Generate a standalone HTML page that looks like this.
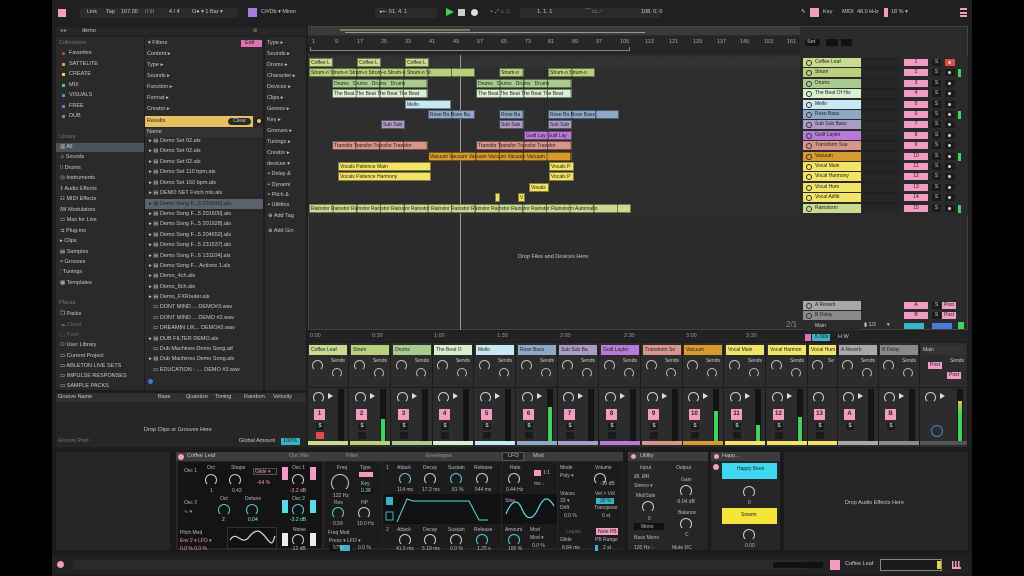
<!DOCTYPE html>
<html><head><meta charset="utf-8"><style>
*{box-sizing:border-box;margin:0;padding:0}
body{width:1024px;height:576px;background:#000;position:relative;overflow:hidden;font-family:"Liberation Sans",sans-serif;font-size:6px;color:#c8c8c8}
.a{position:absolute}
.t{position:absolute;white-space:nowrap;font-size:5.5px;line-height:7px}
.c{position:absolute;height:9px;font-size:5px;line-height:8px;color:#1c1c1c;padding-left:1px;border:1px solid rgba(0,0,0,.45);overflow:hidden;white-space:nowrap;background-image:repeating-linear-gradient(90deg,transparent 0 22.5px,rgba(0,0,0,.45) 22.5px 23.7px)}
.th{position:absolute;left:803px;width:58px;height:9px;font-size:5px;line-height:9px;color:#222;padding-left:12px}
.th:before{content:"";position:absolute;left:3px;top:2px;width:4px;height:4px;border:1px solid #333;border-radius:50%}
.nm{position:absolute;left:904px;width:24px;height:7px;background:#f29cc4;color:#222;font-size:5px;text-align:center;line-height:7px}
.sb{position:absolute;left:932px;width:9px;height:7px;background:#1b1b1b;color:#ccc;font-size:5px;text-align:center;line-height:7px}
.rb{position:absolute;left:945px;width:10px;height:7px;background:#1b1b1b}
.rb:after{content:"";position:absolute;left:3px;top:2px;width:3px;height:3px;border-radius:50%;background:#ccc}
.st{position:absolute;top:343px;width:41px;height:103px;background:#2c2c2c;border-right:1px solid #1c1c1c}
.st .tt{position:absolute;left:1px;right:1px;top:2px;height:10px;font-size:5px;line-height:10px;padding-left:2px;color:#222;overflow:hidden;white-space:nowrap}
.st .k1{position:absolute;left:4px;top:17px;width:11px;height:11px;border:1.5px solid #bbb;border-bottom-color:transparent;border-radius:50%}
.st .k2{position:absolute;left:24px;top:25px;width:10px;height:10px;border:1.5px solid #bbb;border-bottom-color:transparent;border-radius:50%}
.st .sd{position:absolute;right:3px;top:15px;font-size:5px;font-weight:normal;color:#ccc}
.st .ln{position:absolute;left:0;right:0;top:44px;height:1px;background:#1c1c1c}
.st .pk{position:absolute;left:5px;top:49px;width:11px;height:11px;border:1.5px solid #ccc;border-bottom-color:transparent;border-radius:50%}
.st .tri{position:absolute;left:20px;top:50px;width:0;height:0;border-left:5px solid #ddd;border-top:3px solid transparent;border-bottom:3px solid transparent}
.st .mt{position:absolute;left:30px;top:46px;width:6px;height:52px;background:#141414}
.st .lv{position:absolute;left:1px;right:1px;bottom:0;background:#3fd35f}
.st .n{position:absolute;left:6px;top:66px;width:11px;height:11px;background:#f29cc4;color:#222;font-size:6px;text-align:center;line-height:11px;font-weight:bold}
.st .s{position:absolute;left:8px;top:80px;width:8px;height:7px;background:#1b1b1b;color:#ccc;font-size:5px;text-align:center;line-height:7px}
.st .r{position:absolute;left:8px;top:89px;width:8px;height:7px;background:#1b1b1b}
.st .cs{position:absolute;left:0;right:0;top:98px;height:4px}
.kn{position:absolute;width:12px;height:12px;border:1.5px solid #ccc;border-bottom-color:transparent;border-radius:50%}
.kc{border-color:#5cc8d8;border-bottom-color:transparent}
.lb{position:absolute;font-size:5px;color:#bbb;white-space:nowrap}
.vb{position:absolute;font-size:5px;color:#8ed;white-space:nowrap}
</style></head><body>
<!-- app background -->
<div class="a" style="left:52px;top:0;width:920px;height:576px;background:#1d1d1d"></div>
<!-- top bar -->
<div class="a" style="left:52px;top:0;width:920px;height:26px;background:#202020"></div>
<div class="a" style="left:58px;top:9px;width:8px;height:8px;background:#f29cc4"></div>
<div class="a" style="left:80px;top:8px;width:158px;height:10px;background:#2a2a2a"></div>
<span class="t" style="left:87px;top:9px">Link</span><span class="t" style="left:106px;top:9px">Tap</span><span class="t" style="left:121px;top:9px">167.00</span><span class="t" style="left:145px;top:9px">⁞⁞  ⁞⁞⁞</span><span class="t" style="left:169px;top:9px">4 / 4</span><span class="t" style="left:192px;top:9px">O● ▾ 1 Bar ▾</span>
<div class="a" style="left:248px;top:8px;width:9px;height:9px;background:#a67be0"></div>
<span class="t" style="left:261px;top:9px">C#/Db ▾  Minor</span>
<div class="a" style="left:375px;top:8px;width:62px;height:10px;background:#2a2a2a"></div>
<span class="t" style="left:380px;top:9px">▸⇠   51.  4.  1</span>
<div class="a" style="left:446px;top:8px;width:0;height:0;border-left:8px solid #3fd35f;border-top:4.5px solid transparent;border-bottom:4.5px solid transparent"></div>
<div class="a" style="left:458px;top:9px;width:7px;height:7px;background:#ccc"></div>
<div class="a" style="left:471px;top:9px;width:7px;height:7px;background:#ddd;border-radius:50%"></div>
<span class="t" style="left:490px;top:9px;color:#999">+ ⤢  ⌂  ↺</span>
<div class="a" style="left:520px;top:8px;width:140px;height:10px;background:#2a2a2a"></div>
<span class="t" style="left:537px;top:9px">1.   1.   1</span><span class="t" style="left:585px;top:9px;color:#999">⌒ ▭ ⟋</span><span class="t" style="left:641px;top:9px">108.   0.   0</span>
<span class="t" style="left:801px;top:9px">✎</span><div class="a" style="left:810px;top:8px;width:9px;height:9px;background:#f29cc4"></div>
<span class="t" style="left:823px;top:9px">Key</span><span class="t" style="left:842px;top:9px">MIDI</span><span class="t" style="left:857px;top:9px">48.0 kHz</span>
<div class="a" style="left:884px;top:8px;width:4px;height:9px;background:#f29cc4"></div><span class="t" style="left:891px;top:9px">18 %   ▾</span>
<div class="a" style="left:960px;top:8px;width:7px;height:9px;border-top:2px solid #f29cc4;border-bottom:2px solid #f29cc4"></div><div class="a" style="left:960px;top:12px;width:7px;height:1.5px;background:#f29cc4"></div>

<!-- browser -->
<div class="a" style="left:56px;top:27px;width:250px;height:9px;background:#262626"></div>
<span class="t" style="left:60px;top:28px;color:#999">◂ ▸</span><span class="t" style="left:82px;top:28px">demo</span><span class="t" style="left:253px;top:28px;color:#999">⊗</span>
<div class="a" style="left:56px;top:37px;width:88px;height:353px;background:#2a2a2a"></div>
<div class="a" style="left:145px;top:37px;width:118px;height:353px;background:#2a2a2a"></div>
<div class="a" style="left:265px;top:37px;width:41px;height:353px;background:#2a2a2a"></div>
<span class="t" style="left:59px;top:40px;color:#777">Collections</span>
<div class="a" style="left:62px;top:52px;width:3px;height:3px;background:#e03a3a;border-radius:50%"></div><span class="t" style="left:69px;top:50px">Favorites</span>
<div class="a" style="left:62px;top:63px;width:3px;height:3px;background:#f09a30"></div><span class="t" style="left:69px;top:61px">SATTELITE</span>
<div class="a" style="left:62px;top:73px;width:3px;height:3px;background:#f0d840"></div><span class="t" style="left:69px;top:71px">CREATE</span>
<div class="a" style="left:62px;top:84px;width:3px;height:3px;background:#3fd38a"></div><span class="t" style="left:69px;top:82px">MIX</span>
<div class="a" style="left:62px;top:94px;width:3px;height:3px;background:#3a9ae0"></div><span class="t" style="left:69px;top:92px">VISUALS</span>
<div class="a" style="left:62px;top:105px;width:3px;height:3px;background:#a65ae0"></div><span class="t" style="left:69px;top:103px">FREE</span>
<div class="a" style="left:62px;top:115px;width:3px;height:3px;background:#888"></div><span class="t" style="left:69px;top:113px">DUB</span>
<span class="t" style="left:59px;top:134px;color:#777">Library</span>
<div class="a" style="left:56px;top:143px;width:88px;height:9px;background:#4b535a"></div>
<span class="t" style="left:60px;top:144px">▥ All</span><span class="t" style="left:60px;top:154px">♫ Sounds</span><span class="t" style="left:60px;top:165px">⁞⁞ Drums</span><span class="t" style="left:60px;top:175px">◷ Instruments</span><span class="t" style="left:60px;top:186px">⫩ Audio Effects</span><span class="t" style="left:60px;top:196px">☷ MIDI Effects</span><span class="t" style="left:60px;top:207px">ꟿ Modulators</span><span class="t" style="left:60px;top:217px">▭ Max for Live</span><span class="t" style="left:60px;top:228px">⊐ Plug-ins</span><span class="t" style="left:60px;top:238px">▸ Clips</span><span class="t" style="left:60px;top:249px">▤ Samples</span><span class="t" style="left:60px;top:259px">≈ Grooves</span><span class="t" style="left:60px;top:269px">⫶ Tunings</span><span class="t" style="left:60px;top:280px">▦ Templates</span>
<span class="t" style="left:59px;top:300px;color:#777">Places</span>
<span class="t" style="left:60px;top:311px">❐ Packs</span><span class="t" style="left:60px;top:322px;color:#666">☁ Cloud</span><span class="t" style="left:60px;top:332px;color:#666">▢ Push</span><span class="t" style="left:60px;top:342px">⚇ User Library</span><span class="t" style="left:60px;top:353px">▭ Current Project</span><span class="t" style="left:60px;top:363px">▭ ABLETON LIVE SETS</span><span class="t" style="left:60px;top:373px">▭ IMPULSE RESPONSES</span><span class="t" style="left:60px;top:383px">▭ SAMPLE PACKS</span>
<span class="t" style="left:148px;top:40px">▾ Filters</span><div class="a" style="left:241px;top:40px;width:21px;height:7px;background:#e070b0"></div><span class="t" style="left:245px;top:40px;color:#222">Edit</span>
<span class="t" style="left:147px;top:51px">Content ▸</span><span class="t" style="left:147px;top:62px">Type ▸</span><span class="t" style="left:147px;top:73px">Sounds ▸</span><span class="t" style="left:147px;top:84px">Function ▸</span><span class="t" style="left:147px;top:95px">Format ▸</span><span class="t" style="left:147px;top:106px">Creator ▸</span>
<div class="a" style="left:145px;top:116px;width:108px;height:11px;background:#e8c060"></div><span class="t" style="left:147px;top:118px;color:#222">Results</span>
<div class="a" style="left:228px;top:118px;width:23px;height:7px;background:#2a2a2a;border-radius:4px"></div><span class="t" style="left:233px;top:118px">Clear</span>
<div class="a" style="left:255px;top:117px;width:8px;height:8px;background:#e8c060;border-radius:50%;border:2px solid #222"></div>
<div class="a" style="left:145px;top:128px;width:118px;height:9px;background:#333"></div><span class="t" style="left:147px;top:129px">Name</span>
<div class="a" style="left:145px;top:199px;width:118px;height:10px;background:#5a636b"></div>
<span class="t" style="left:149px;top:138px">▸ ▤ Demo Set 02.als</span><span class="t" style="left:149px;top:148px">▸ ▤ Demo Set 02.als</span><span class="t" style="left:149px;top:159px">▸ ▤ Demo Set 02.als</span><span class="t" style="left:149px;top:169px">▸ ▤ Demo Set 110 bpm.als</span><span class="t" style="left:149px;top:180px">▸ ▤ Demo Set 150 bpm.als</span><span class="t" style="left:149px;top:190px">▸ ▤ DEMO SET Fvtch mls.als</span><span class="t" style="left:149px;top:201px;color:#222">▸ ▤ Demo Song F...5 201542].als</span><span class="t" style="left:149px;top:211px">▸ ▤ Demo Song F...5 201600].als</span><span class="t" style="left:149px;top:221px">▸ ▤ Demo Song F...5 201928].als</span><span class="t" style="left:149px;top:232px">▸ ▤ Demo Song F...5 204652].als</span><span class="t" style="left:149px;top:242px">▸ ▤ Demo Song F...5 231537].als</span><span class="t" style="left:149px;top:253px">▸ ▤ Demo Song F...6 131104].als</span><span class="t" style="left:149px;top:263px">▸ ▤ Demo Song F... Actions 1.als</span><span class="t" style="left:149px;top:273px">▸ ▤ Demo_4ch.als</span><span class="t" style="left:149px;top:284px">▸ ▤ Demo_8ch.als</span><span class="t" style="left:149px;top:294px">▸ ▤ Demo_FXRouter.als</span><span class="t" style="left:153px;top:304px">▭ DONT MIND ... DEMO#3.wav</span><span class="t" style="left:153px;top:315px">▭ DONT MIND ... DEMO #2.wav</span><span class="t" style="left:153px;top:325px">▭ DREAMIN LIK... DEMO#2.wav</span><span class="t" style="left:149px;top:336px">▸ ▤ DUB FILTER DEMO.als</span><span class="t" style="left:153px;top:346px">▭ Dub Machines Demo Song.aif</span><span class="t" style="left:149px;top:356px">▸ ▤ Dub Machines Demo Song.als</span><span class="t" style="left:153px;top:367px">▭ EDUCATION - .... DEMO #3.wav</span>
<div class="a" style="left:148px;top:379px;width:5px;height:5px;background:#3a7ae0;border-radius:50%"></div>
<span class="t" style="left:267px;top:40px">Type ▸</span><span class="t" style="left:267px;top:51px">Sounds ▸</span><span class="t" style="left:267px;top:62px">Drums ▸</span><span class="t" style="left:267px;top:73px">Character ▸</span><span class="t" style="left:267px;top:84px">Devices ▸</span><span class="t" style="left:267px;top:95px">Clips ▸</span><span class="t" style="left:267px;top:106px">Genres ▸</span><span class="t" style="left:267px;top:117px">Key ▸</span><span class="t" style="left:267px;top:128px">Grooves ▸</span><span class="t" style="left:267px;top:139px">Tunings ▸</span><span class="t" style="left:267px;top:150px">Creator ▸</span><span class="t" style="left:267px;top:161px">devices ▾</span><span class="t" style="left:268px;top:171px">▪ Delay &amp;</span><span class="t" style="left:268px;top:182px">▪ Dynami</span><span class="t" style="left:268px;top:192px">▪ Pitch &amp;</span><span class="t" style="left:268px;top:202px">▪ Utilities</span><span class="t" style="left:268px;top:213px">⊕ Add Tag</span><span class="t" style="left:268px;top:228px">⊕ Add Grc</span>
<!-- groove pool -->
<div class="a" style="left:56px;top:393px;width:250px;height:54px;background:#262626"></div>
<div class="a" style="left:56px;top:393px;width:250px;height:9px;background:#303030"></div>
<span class="t" style="left:58px;top:394px">Groove Name</span><span class="t" style="left:158px;top:394px">Base</span><span class="t" style="left:186px;top:394px">Quantize</span><span class="t" style="left:215px;top:394px">Timing</span><span class="t" style="left:244px;top:394px">Random</span><span class="t" style="left:273px;top:394px">Velocity</span>
<span class="t" style="left:144px;top:427px">Drop Clips or Grooves Here</span>
<span class="t" style="left:58px;top:438px;color:#777">Groove Pool</span><span class="t" style="left:239px;top:438px">Global Amount</span><div class="a" style="left:281px;top:438px;width:19px;height:7px;background:#3ab4c8"></div><span class="t" style="left:283px;top:438px;color:#222">100%</span>

<!-- arrangement -->
<div class="a" style="left:308px;top:26px;width:660px;height:304px;background:#2b2b2b;border:1px solid #444"></div>
<div class="a" style="left:310px;top:27px;width:490px;height:8px;background:#3a3a3a"></div>
<div class="a" style="left:340px;top:29px;width:130px;height:2px;background:#7a7a5a"></div><div class="a" style="left:345px;top:32px;width:300px;height:1px;background:#999"></div>
<div class="a" style="left:308px;top:36px;width:492px;height:18px;background:#262626"></div>
<span class="t" style="left:312px;top:39px;color:#aaa;word-spacing:0">1</span><span class="t" style="left:335px;top:39px;color:#aaa">9</span><span class="t" style="left:357px;top:39px;color:#aaa">17</span><span class="t" style="left:381px;top:39px;color:#aaa">25</span><span class="t" style="left:405px;top:39px;color:#aaa">33</span><span class="t" style="left:429px;top:39px;color:#aaa">41</span><span class="t" style="left:453px;top:39px;color:#aaa">49</span><span class="t" style="left:477px;top:39px;color:#aaa">57</span><span class="t" style="left:501px;top:39px;color:#aaa">65</span><span class="t" style="left:525px;top:39px;color:#aaa">73</span><span class="t" style="left:548px;top:39px;color:#aaa">81</span><span class="t" style="left:572px;top:39px;color:#aaa">89</span><span class="t" style="left:596px;top:39px;color:#aaa">97</span><span class="t" style="left:620px;top:39px;color:#aaa">105</span><span class="t" style="left:645px;top:39px;color:#aaa">113</span><span class="t" style="left:669px;top:39px;color:#aaa">121</span><span class="t" style="left:693px;top:39px;color:#aaa">129</span><span class="t" style="left:717px;top:39px;color:#aaa">137</span><span class="t" style="left:740px;top:39px;color:#aaa">145</span><span class="t" style="left:764px;top:39px;color:#aaa">153</span><span class="t" style="left:787px;top:39px;color:#aaa">161</span>
<div class="a" style="left:310px;top:47px;width:320px;height:4px;border:1px solid #888;border-top:none"></div>
<div class="a" style="left:805px;top:39px;width:15px;height:7px;background:#111;border-radius:3px"></div><span class="t" style="left:807px;top:39px">Set</span>
<div class="a" style="left:826px;top:39px;width:12px;height:7px;background:#111"></div><div class="a" style="left:841px;top:39px;width:11px;height:7px;background:#111"></div>
<div class="a" style="left:308px;top:56px;width:492px;height:160px;background-image:repeating-linear-gradient(90deg,#2e2e2e 0 2.9px,#262626 2.9px 2.96px),repeating-linear-gradient(0deg,transparent 0 9.4px,#222 9.4px 10.4px)"></div>
<div class="a" style="left:308px;top:57px;width:492px;height:10px;background:#333"></div>
<div class="a" style="left:460px;top:55px;width:1px;height:275px;background:#9a9a9a"></div>
<!-- clips -->
<div class="c" style="left:309px;top:58px;width:24px;background-color:#c7dc8e">Coffee L</div><div class="c" style="left:357px;top:58px;width:24px;background-color:#c7dc8e">Coffee L</div><div class="c" style="left:405px;top:58px;width:24px;background-color:#c7dc8e">Coffee L</div>
<div class="c" style="left:309px;top:68px;width:166px;background-color:#b9cf7c">Strum-o Strum-o Strum-o Strum-o Strum-o Strum-o St</div><div class="c" style="left:499px;top:68px;width:25px;background-color:#b9cf7c">Strum-o</div><div class="c" style="left:548px;top:68px;width:47px;background-color:#b9cf7c">Strum-o Strum-o</div>
<div class="c" style="left:332px;top:79px;width:96px;background-color:#a9cc8e">Drums &nbsp; Drums &nbsp; Drums &nbsp; Drums</div><div class="c" style="left:476px;top:79px;width:96px;background-color:#a9cc8e">Drums &nbsp; Drums &nbsp; Drums &nbsp; Drums</div>
<div class="c" style="left:332px;top:89px;width:96px;background-color:#d9f0d0">The Beat The Beat The Beat The Beat</div><div class="c" style="left:476px;top:89px;width:96px;background-color:#d9f0d0">The Beat The Beat The Beat The Beat</div>
<div class="c" style="left:405px;top:100px;width:46px;background-color:#c8e8f2;background-image:none">Mello</div>
<div class="c" style="left:428px;top:110px;width:47px;background-color:#8ea8c8">Rose Ba Rose Ba</div><div class="c" style="left:499px;top:110px;width:25px;background-color:#8ea8c8">Rose Ba</div><div class="c" style="left:548px;top:110px;width:71px;background-color:#8ea8c8">Rose Ba Rose Bass</div>
<div class="c" style="left:381px;top:120px;width:24px;background-color:#aa9cc4">Sub Sub</div><div class="c" style="left:499px;top:120px;width:25px;background-color:#aa9cc4">Sub Sub</div><div class="c" style="left:548px;top:120px;width:24px;background-color:#aa9cc4">Sub Sub</div>
<div class="c" style="left:524px;top:131px;width:48px;background-color:#b87ad8">Guilt Lay Guilt Lay</div>
<div class="c" style="left:332px;top:141px;width:96px;background-color:#d8968a">Transfor Transfor Transfor Transfor</div><div class="c" style="left:476px;top:141px;width:96px;background-color:#d8968a">Transfor Transfor Transfor Transfor</div>
<div class="c" style="left:428px;top:152px;width:144px;background-color:#d89a2c">Vacuum Vacuum Vacuum Vacuum Vacuum Vacuum</div>
<div class="c" style="left:338px;top:162px;width:93px;background-color:#f2e466;background-image:none">Vocals Patience Main</div><div class="c" style="left:549px;top:162px;width:25px;background-color:#f2e466;background-image:none">Vocals P</div>
<div class="c" style="left:338px;top:172px;width:93px;background-color:#f2e466;background-image:none">Vocals Patience Harmony</div><div class="c" style="left:549px;top:172px;width:25px;background-color:#f2e466;background-image:none">Vocals P</div>
<div class="c" style="left:529px;top:183px;width:20px;background-color:#f2e466;background-image:none">Vocals</div>
<div class="c" style="left:495px;top:193px;width:5px;background-color:#f2e466;background-image:none"></div><div class="c" style="left:518px;top:193px;width:7px;background-color:#f2e466;background-image:none">V</div>
<div class="c" style="left:309px;top:204px;width:322px;background-color:#c7dc8e">Rainstor Rainstor Rainstor Rainstor Rainstor Rainstor Rainstor Rainstor Rainstor Rainstor Rainstor Rainstor Rainstorm Automatio</div>
<span class="t" style="left:518px;top:254px">Drop Files and Devices Here</span>
<!-- track headers -->
<div class="a" style="left:800px;top:56px;width:168px;height:160px;background:#2a2a2a"></div>
<div class="a" style="left:862px;top:58px;width:38px;height:155px;background-image:repeating-linear-gradient(0deg,#262626 0 9px,#1f1f1f 9px 10.4px)"></div>
<div class="th" style="top:58px;background:#c7dc8e">Coffee Leaf</div><div class="nm" style="top:59px">1</div><div class="sb" style="top:59px">S</div><div class="rb" style="top:59px;background:#e04a4a"></div>
<div class="th" style="top:68px;background:#b9cf7c">Strum</div><div class="nm" style="top:69px">2</div><div class="sb" style="top:69px">S</div><div class="rb" style="top:69px"></div>
<div class="th" style="top:79px;background:#a9cc8e">Drums</div><div class="nm" style="top:80px">3</div><div class="sb" style="top:80px">S</div><div class="rb" style="top:80px"></div>
<div class="th" style="top:89px;background:#d9f0d0">The Beat Of His</div><div class="nm" style="top:90px">4</div><div class="sb" style="top:90px">S</div><div class="rb" style="top:90px"></div>
<div class="th" style="top:100px;background:#c8e8f2">Mello</div><div class="nm" style="top:101px">5</div><div class="sb" style="top:101px">S</div><div class="rb" style="top:101px"></div>
<div class="th" style="top:110px;background:#8ea8c8">Rose Bass</div><div class="nm" style="top:111px">6</div><div class="sb" style="top:111px">S</div><div class="rb" style="top:111px"></div>
<div class="th" style="top:120px;background:#aa9cc4">Sub Sub Bass</div><div class="nm" style="top:121px">7</div><div class="sb" style="top:121px">S</div><div class="rb" style="top:121px"></div>
<div class="th" style="top:131px;background:#b87ad8">Guilt Layter</div><div class="nm" style="top:132px">8</div><div class="sb" style="top:132px">S</div><div class="rb" style="top:132px"></div>
<div class="th" style="top:141px;background:#d8968a">Transform Sse</div><div class="nm" style="top:142px">9</div><div class="sb" style="top:142px">S</div><div class="rb" style="top:142px"></div>
<div class="th" style="top:152px;background:#d89a2c">Vacuum</div><div class="nm" style="top:153px">10</div><div class="sb" style="top:153px">S</div><div class="rb" style="top:153px"></div>
<div class="th" style="top:162px;background:#f2e466">Vocal Main</div><div class="nm" style="top:163px">11</div><div class="sb" style="top:163px">S</div><div class="rb" style="top:163px"></div>
<div class="th" style="top:172px;background:#f2e466">Vocal Harmony</div><div class="nm" style="top:173px">12</div><div class="sb" style="top:173px">S</div><div class="rb" style="top:173px"></div>
<div class="th" style="top:183px;background:#f2e466">Vocal Hum</div><div class="nm" style="top:184px">13</div><div class="sb" style="top:184px">S</div><div class="rb" style="top:184px"></div>
<div class="th" style="top:193px;background:#f2e466">Vocal Adlib</div><div class="nm" style="top:194px">14</div><div class="sb" style="top:194px">S</div><div class="rb" style="top:194px"></div>
<div class="th" style="top:204px;background:#c7dc8e">Rainstorm</div><div class="nm" style="top:205px">15</div><div class="sb" style="top:205px">S</div><div class="rb" style="top:205px"></div>
<div class="a" style="left:958px;top:69px;width:3px;height:8px;background:#3fd35f"></div><div class="a" style="left:958px;top:111px;width:3px;height:8px;background:#3fd35f"></div><div class="a" style="left:958px;top:153px;width:3px;height:8px;background:#3fd35f"></div><div class="a" style="left:958px;top:205px;width:3px;height:8px;background:#3fd35f"></div>
<!-- returns -->
<div class="th" style="top:301px;background:#a8a8a8">A Reverb</div><div class="nm" style="top:302px">A</div><div class="sb" style="top:302px">S</div><div class="a" style="left:942px;top:302px;width:14px;height:7px;background:#f29cc4;font-size:5px;color:#222;line-height:7px;text-align:center">Post</div>
<div class="th" style="top:311px;background:#8a8a8a">B Delay</div><div class="nm" style="top:312px">B</div><div class="sb" style="top:312px">S</div><div class="a" style="left:942px;top:312px;width:14px;height:7px;background:#f29cc4;font-size:5px;color:#222;line-height:7px;text-align:center">Post</div>
<span class="t" style="left:786px;top:321px;font-size:8px;color:#888">2/1</span>
<div class="th" style="top:322px;background:#2a2a2a;color:#ccc">Main</div>
<span class="t" style="left:864px;top:322px">▮ 1/2 &nbsp; &nbsp; &nbsp; ▾</span>
<div class="a" style="left:904px;top:323px;width:20px;height:6px;background:#3ab4c8"></div><div class="a" style="left:932px;top:323px;width:20px;height:6px;background:#4a7ae0"></div><div class="a" style="left:958px;top:322px;width:6px;height:7px;background:#3fd35f"></div>
<!-- time ruler -->
<div class="a" style="left:308px;top:331px;width:660px;height:11px;background:#222"></div>
<span class="t" style="left:310px;top:333px;color:#999">0:00</span><span class="t" style="left:372px;top:333px;color:#999">0:30</span><span class="t" style="left:434px;top:333px;color:#999">1:00</span><span class="t" style="left:497px;top:333px;color:#999">1:30</span><span class="t" style="left:560px;top:333px;color:#999">2:00</span><span class="t" style="left:624px;top:333px;color:#999">2:30</span><span class="t" style="left:686px;top:333px;color:#999">3:00</span><span class="t" style="left:746px;top:333px;color:#999">3:30</span>
<div class="a" style="left:805px;top:334px;width:6px;height:7px;background:#e070b0"></div><div class="a" style="left:812px;top:334px;width:18px;height:7px;background:#3ab4c8"></div><span class="t" style="left:815px;top:334px;color:#222">5.00s</span><span class="t" style="left:838px;top:334px">H  W</span>
<!-- mixer -->
<div class="a" style="left:308px;top:343px;width:660px;height:104px;background:#2c2c2c"></div>
<div class="st" style="left:308px"><div class="tt" style="background:#c7dc8e">Coffee Leaf</div><i class="k1"></i><i class="k2"></i><b class="sd">Sends</b><i class="ln"></i><i class="pk"></i><i class="tri"></i><i class="mt"></i><b class="n">1</b><b class="s">S</b><b class="r" style="background:#e04a4a"></b><i class="cs" style="background:#c7dc8e"></i></div>
<div class="st" style="left:350px"><div class="tt" style="background:#b9cf7c">Strum</div><i class="k1"></i><i class="k2"></i><b class="sd">Sends</b><i class="ln"></i><i class="pk"></i><i class="tri"></i><i class="mt"><i class="lv" style="height:22px"></i></i><b class="n">2</b><b class="s">S</b><b class="r"></b><i class="cs" style="background:#b9cf7c"></i></div>
<div class="st" style="left:392px"><div class="tt" style="background:#a9cc8e">Drums</div><i class="k1"></i><i class="k2"></i><b class="sd">Sends</b><i class="ln"></i><i class="pk"></i><i class="tri"></i><i class="mt"></i><b class="n">3</b><b class="s">S</b><b class="r"></b><i class="cs" style="background:#a9cc8e"></i></div>
<div class="st" style="left:433px"><div class="tt" style="background:#d9f0d0">The Beat O</div><i class="k1"></i><i class="k2"></i><b class="sd">Sends</b><i class="ln"></i><i class="pk"></i><i class="tri"></i><i class="mt"></i><b class="n">4</b><b class="s">S</b><b class="r"></b><i class="cs" style="background:#d9f0d0"></i></div>
<div class="st" style="left:475px"><div class="tt" style="background:#c8e8f2">Mello</div><i class="k1"></i><i class="k2"></i><b class="sd">Sends</b><i class="ln"></i><i class="pk"></i><i class="tri"></i><i class="mt"></i><b class="n">5</b><b class="s">S</b><b class="r"></b><i class="cs" style="background:#c8e8f2"></i></div>
<div class="st" style="left:517px"><div class="tt" style="background:#8ea8c8">Rose Bass</div><i class="k1"></i><i class="k2"></i><b class="sd">Sends</b><i class="ln"></i><i class="pk"></i><i class="tri"></i><i class="mt"><i class="lv" style="height:34px"></i></i><b class="n">6</b><b class="s">S</b><b class="r"></b><i class="cs" style="background:#8ea8c8"></i></div>
<div class="st" style="left:558px"><div class="tt" style="background:#aa9cc4">Sub Sub Ba</div><i class="k1"></i><i class="k2"></i><b class="sd">Sends</b><i class="ln"></i><i class="pk"></i><i class="tri"></i><i class="mt"></i><b class="n">7</b><b class="s">S</b><b class="r"></b><i class="cs" style="background:#aa9cc4"></i></div>
<div class="st" style="left:600px"><div class="tt" style="background:#b87ad8">Guilt Layter</div><i class="k1"></i><i class="k2"></i><b class="sd">Sends</b><i class="ln"></i><i class="pk"></i><i class="tri"></i><i class="mt"></i><b class="n">8</b><b class="s">S</b><b class="r"></b><i class="cs" style="background:#b87ad8"></i></div>
<div class="st" style="left:642px"><div class="tt" style="background:#d8968a">Transform Se</div><i class="k1"></i><i class="k2"></i><b class="sd">Sends</b><i class="ln"></i><i class="pk"></i><i class="tri"></i><i class="mt"></i><b class="n">9</b><b class="s">S</b><b class="r"></b><i class="cs" style="background:#d8968a"></i></div>
<div class="st" style="left:683px"><div class="tt" style="background:#d89a2c">Vacuum</div><i class="k1"></i><i class="k2"></i><b class="sd">Sends</b><i class="ln"></i><i class="pk"></i><i class="tri"></i><i class="mt"><i class="lv" style="height:30px"></i></i><b class="n">10</b><b class="s">S</b><b class="r"></b><i class="cs" style="background:#d89a2c"></i></div>
<div class="st" style="left:725px"><div class="tt" style="background:#f2e466">Vocal Main</div><i class="k1"></i><i class="k2"></i><b class="sd">Sends</b><i class="ln"></i><i class="pk"></i><i class="tri"></i><i class="mt"><i class="lv" style="height:16px"></i></i><b class="n">11</b><b class="s">S</b><b class="r"></b><i class="cs" style="background:#f2e466"></i></div>
<div class="st" style="left:767px"><div class="tt" style="background:#f2e466">Vocal Harmon</div><i class="k1"></i><i class="k2"></i><b class="sd">Sends</b><i class="ln"></i><i class="pk"></i><i class="tri"></i><i class="mt"><i class="lv" style="height:24px"></i></i><b class="n">12</b><b class="s">S</b><b class="r"></b><i class="cs" style="background:#f2e466"></i></div>
<div class="st" style="left:808px;width:30px"><div class="tt" style="background:#f2e466">Vocal Hum</div><i class="k1"></i><b class="sd">Se</b><i class="ln"></i><i class="pk"></i><b class="n">13</b><b class="s">S</b><b class="r"></b><i class="cs" style="background:#f2e466"></i></div>
<div class="st" style="left:838px"><div class="tt" style="background:#a8a8a8">A Reverb</div><i class="k1"></i><i class="k2"></i><b class="sd">Sends</b><i class="ln"></i><i class="pk"></i><i class="tri"></i><i class="mt"></i><b class="n">A</b><b class="s">S</b><i class="cs" style="background:#a8a8a8"></i></div>
<div class="st" style="left:879px"><div class="tt" style="background:#8a8a8a">B Delay</div><i class="k1"></i><i class="k2"></i><b class="sd">Sends</b><i class="ln"></i><i class="pk"></i><i class="tri"></i><i class="mt"></i><b class="n">B</b><b class="s">S</b><i class="cs" style="background:#8a8a8a"></i></div>
<div class="st" style="left:920px;width:48px"><div class="tt" style="background:#333;color:#ccc">Main</div><b class="sd">Sends</b><i class="ln"></i><i class="pk"></i><i class="tri"></i><i class="mt" style="left:37px"><i class="lv" style="height:40px;background:linear-gradient(#e8c040,#3fd35f 30%)"></i></i><i class="cs" style="background:#555"></i></div>
<div class="a" style="left:928px;top:362px;width:14px;height:7px;background:#f29cc4;font-size:5px;color:#222;text-align:center;line-height:7px">Post</div><div class="a" style="left:947px;top:372px;width:14px;height:7px;background:#f29cc4;font-size:5px;color:#222;text-align:center;line-height:7px">Post</div>
<div class="a" style="left:931px;top:425px;width:12px;height:12px;border:1.5px solid #4a7ae0;border-radius:50%"></div>

<!-- device area -->
<div class="a" style="left:52px;top:450px;width:920px;height:102px;background:#1a1a1a"></div>
<div class="a" style="left:56px;top:452px;width:114px;height:98px;background:#262626"></div>
<div class="a" style="left:176px;top:452px;width:447px;height:98px;background:#262626;border-radius:2px"></div>
<div class="a" style="left:176px;top:452px;width:447px;height:9px;background:#3c3c3c"></div>
<div class="a" style="left:178px;top:454px;width:6px;height:6px;border-radius:50%;background:#f29cc4"></div>
<span class="t" style="left:187px;top:453px">Coffee Leaf</span><span class="t" style="left:289px;top:453px;color:#999">Osc Mix</span><span class="t" style="left:346px;top:453px;color:#999">Filter</span><span class="t" style="left:426px;top:453px;color:#999">Envelopes</span>
<div class="a" style="left:502px;top:452px;width:22px;height:9px;background:#222;border:1px solid #555"></div><span class="t" style="left:508px;top:453px">LFO</span><span class="t" style="left:533px;top:453px">Mod</span>
<div class="a" style="left:178px;top:462px;width:144px;height:86px;background:#141414"></div>
<div class="a" style="left:324px;top:462px;width:58px;height:86px;background:#1c1c1c"></div>
<div class="a" style="left:383px;top:462px;width:118px;height:86px;background:#1c1c1c"></div>
<div class="a" style="left:502px;top:462px;width:55px;height:86px;background:#1c1c1c"></div>
<div class="a" style="left:558px;top:462px;width:64px;height:86px;background:#1c1c1c"></div>
<span class="lb" style="left:184px;top:468px">Osc 1</span><span class="lb" style="left:207px;top:465px">Oct</span><span class="lb" style="left:231px;top:465px">Shape</span>
<div class="kn" style="left:205px;top:474px"></div><div class="kn" style="left:229px;top:474px"></div><span class="lb" style="left:210px;top:488px">1</span><span class="lb" style="left:232px;top:488px">0.42</span>
<div class="a" style="left:253px;top:468px;width:24px;height:7px;border:1px solid #555"></div><span class="lb" style="left:255px;top:469px;color:#f29cc4">Glide ▾</span><span class="lb" style="left:257px;top:480px;color:#f29cc4">-64 %</span>
<div class="a" style="left:282px;top:467px;width:6px;height:13px;background:#f29cc4"></div><div class="a" style="left:310px;top:467px;width:6px;height:13px;background:#f29cc4"></div>
<span class="lb" style="left:292px;top:465px">Osc 1</span><div class="kn" style="left:292px;top:474px"></div><span class="lb" style="left:290px;top:488px;color:#f29cc4">-3.2 dB</span>
<span class="lb" style="left:184px;top:500px">Osc 2</span><span class="lb" style="left:184px;top:509px">∿ ▾</span><span class="lb" style="left:220px;top:496px">Oct</span><span class="lb" style="left:245px;top:496px">Detune</span>
<div class="kn kc" style="left:218px;top:504px"></div><div class="kn kc" style="left:246px;top:504px"></div><span class="vb" style="left:222px;top:517px">2</span><span class="vb" style="left:248px;top:517px">0.04</span>
<div class="a" style="left:282px;top:500px;width:6px;height:13px;background:#5cd8e8"></div><div class="a" style="left:310px;top:500px;width:6px;height:13px;background:#5cd8e8"></div>
<span class="lb" style="left:292px;top:496px">Osc 2</span><div class="kn kc" style="left:292px;top:504px"></div><span class="vb" style="left:290px;top:517px">-3.2 dB</span>
<span class="lb" style="left:180px;top:530px">Pitch Mod</span><span class="lb" style="left:180px;top:538px;color:#f29cc4">Env 2 ▾  LFO ▾</span><span class="lb" style="left:180px;top:546px;color:#f29cc4">0.0 %   0.0 %</span>
<svg class="a" style="left:227px;top:527px" width="50" height="22"><rect x="0.5" y="0.5" width="49" height="21" fill="#111" stroke="#333"/><path d="M3 13 C10 2,14 20,22 10 S34 4,40 12 S46 14,48 9" stroke="#ddd" stroke-width="1.2" fill="none"/></svg>
<span class="lb" style="left:293px;top:527px">Noise</span><div class="a" style="left:282px;top:533px;width:6px;height:13px;background:#eee"></div><div class="a" style="left:310px;top:533px;width:6px;height:13px;background:#eee"></div><div class="kn" style="left:292px;top:534px"></div><span class="lb" style="left:291px;top:546px">-12 dB</span>
<span class="lb" style="left:337px;top:465px">Freq</span><div class="kn" style="left:331px;top:474px;width:18px;height:18px"></div><span class="lb" style="left:333px;top:493px">122 Hz</span>
<span class="lb" style="left:360px;top:465px">Type</span><div class="a" style="left:359px;top:472px;width:14px;height:5px;background:#f29cc4"></div><span class="lb" style="left:361px;top:481px">Key</span><div class="a" style="left:360px;top:488px;width:13px;height:6px;background:#111"></div><span class="vb" style="left:361px;top:488px">0.38</span>
<span class="lb" style="left:334px;top:500px">Res</span><div class="kn kc" style="left:332px;top:507px"></div><span class="lb" style="left:333px;top:521px">0.59</span><span class="lb" style="left:361px;top:500px">HP</span><div class="kn" style="left:358px;top:507px"></div><span class="lb" style="left:357px;top:521px">10.0 Hz</span>
<span class="lb" style="left:328px;top:530px">Freq Mod</span><span class="lb" style="left:329px;top:538px">Press ▾  LFO ▾</span><div class="a" style="left:329px;top:545px;width:22px;height:6px;background:#111"></div><div class="a" style="left:340px;top:545px;width:10px;height:6px;background:#3ab4c8"></div><span class="lb" style="left:333px;top:545px">57%</span><span class="lb" style="left:358px;top:545px">0.0 %</span>
<span class="lb" style="left:386px;top:465px">1</span><span class="lb" style="left:397px;top:465px">Attack</span><span class="lb" style="left:423px;top:465px">Decay</span><span class="lb" style="left:448px;top:465px">Sustain</span><span class="lb" style="left:474px;top:465px">Release</span>
<div class="kn kc" style="left:399px;top:473px"></div><div class="kn" style="left:424px;top:473px"></div><div class="kn kc" style="left:450px;top:473px"></div><div class="kn" style="left:476px;top:473px"></div>
<span class="lb" style="left:397px;top:487px">114 ms</span><span class="lb" style="left:422px;top:487px">17.2 ms</span><span class="lb" style="left:452px;top:487px">81 %</span><span class="lb" style="left:475px;top:487px">544 ms</span>
<svg class="a" style="left:383px;top:494px" width="118" height="30"><rect width="118" height="30" fill="#111"/><rect x="3" y="3" width="7" height="8" fill="#3ab4c8"/><rect x="3" y="18" width="7" height="8" fill="none" stroke="#3ab4c8"/><path d="M14 28 L24 5 L30 7 L86 7 L96 26 L105 26" stroke="#5cd8e8" stroke-width="1" fill="none"/></svg>
<span class="lb" style="left:386px;top:527px">2</span><span class="lb" style="left:397px;top:527px">Attack</span><span class="lb" style="left:423px;top:527px">Decay</span><span class="lb" style="left:448px;top:527px">Sustain</span><span class="lb" style="left:474px;top:527px">Release</span>
<div class="kn" style="left:399px;top:534px"></div><div class="kn" style="left:424px;top:534px"></div><div class="kn" style="left:450px;top:534px"></div><div class="kn kc" style="left:476px;top:534px"></div>
<span class="lb" style="left:396px;top:546px">41.5 ms</span><span class="lb" style="left:422px;top:546px">5.19 ms</span><span class="lb" style="left:450px;top:546px">0.0 %</span><span class="lb" style="left:477px;top:546px">1.25 s</span>
<span class="lb" style="left:510px;top:465px">Rate</span><div class="kn" style="left:508px;top:473px"></div><span class="lb" style="left:506px;top:487px">0.44 Hz</span><div class="a" style="left:534px;top:470px;width:7px;height:6px;background:#f29cc4"></div><span class="lb" style="left:543px;top:470px">1:1</span><span class="lb" style="left:534px;top:481px">ms  ♩</span>
<svg class="a" style="left:502px;top:494px" width="55" height="30"><rect width="55" height="30" fill="#111"/><text x="3" y="8" font-size="5" fill="#f29cc4" font-family="Liberation Sans">Sine</text><path d="M4 20 C10 5,16 5,20 15 S30 28,36 15 S46 2,52 12" stroke="#5cd8e8" stroke-width="1.2" fill="none"/></svg>
<span class="lb" style="left:505px;top:527px">Amount</span><span class="lb" style="left:530px;top:527px">Mod</span><div class="kn kc" style="left:508px;top:534px"></div><span class="lb" style="left:508px;top:546px">100 %</span><span class="lb" style="left:530px;top:535px">Mod ▾</span><span class="lb" style="left:532px;top:543px">0.0 %</span>
<span class="lb" style="left:560px;top:465px">Mode</span><span class="lb" style="left:560px;top:473px">Poly ▾</span><span class="lb" style="left:595px;top:465px">Volume</span><div class="kn" style="left:594px;top:473px"></div><span class="lb" style="left:600px;top:481px">-30 dB</span>
<span class="lb" style="left:560px;top:491px">Voices</span><span class="lb" style="left:560px;top:498px">33 ▾</span><span class="lb" style="left:595px;top:491px">Vel &gt; Vol</span><div class="a" style="left:596px;top:498px;width:18px;height:6px;background:#3ab4c8"></div><span class="lb" style="left:600px;top:498px;color:#222">30 %</span>
<span class="lb" style="left:560px;top:505px">Drift</span><span class="lb" style="left:564px;top:513px">0.0 %</span><span class="lb" style="left:594px;top:505px">Transpose</span><span class="lb" style="left:602px;top:513px">0 st</span>
<span class="lb" style="left:566px;top:529px;color:#666">Legato</span><div class="a" style="left:596px;top:528px;width:22px;height:7px;background:#f29cc4"></div><span class="lb" style="left:598px;top:529px;color:#222">Note PB</span>
<span class="lb" style="left:560px;top:537px">Glide</span><span class="lb" style="left:562px;top:545px">8.84 ms</span><span class="lb" style="left:595px;top:537px">PB Range</span><div class="a" style="left:595px;top:545px;width:3px;height:6px;background:#3ab4c8"></div><span class="lb" style="left:603px;top:545px">2 st</span>
<!-- utility -->
<div class="a" style="left:628px;top:452px;width:80px;height:98px;background:#262626"></div>
<div class="a" style="left:628px;top:452px;width:80px;height:9px;background:#3c3c3c"></div><div class="a" style="left:631px;top:454px;width:5px;height:5px;border-radius:50%;background:#f29cc4"></div><span class="t" style="left:640px;top:453px">Utility</span>
<span class="lb" style="left:640px;top:465px">Input</span><span class="lb" style="left:676px;top:465px">Output</span>
<span class="lb" style="left:634px;top:474px">ØL  ØR</span><span class="lb" style="left:634px;top:483px">Stereo ▾</span><span class="lb" style="left:636px;top:493px">Mid/Side</span><div class="kn" style="left:642px;top:501px"></div><span class="lb" style="left:648px;top:516px">0</span>
<div class="a" style="left:634px;top:523px;width:30px;height:7px;background:#111"></div><span class="lb" style="left:641px;top:524px">Mono</span>
<span class="lb" style="left:634px;top:535px">Bass Mono</span><span class="lb" style="left:634px;top:545px">120 Hz ◌</span>
<span class="lb" style="left:681px;top:477px">Gain</span><div class="kn" style="left:680px;top:485px"></div><span class="lb" style="left:676px;top:499px">-6.04 dB</span><span class="lb" style="left:678px;top:510px">Balance</span><div class="kn" style="left:680px;top:518px"></div><span class="lb" style="left:685px;top:532px">C</span><span class="lb" style="left:672px;top:545px">Mute  DC</span>
<!-- rack -->
<div class="a" style="left:711px;top:452px;width:69px;height:98px;background:#262626"></div>
<div class="a" style="left:711px;top:452px;width:69px;height:9px;background:#3c3c3c"></div><div class="a" style="left:714px;top:454px;width:5px;height:5px;border-radius:50%;background:#f29cc4"></div><span class="t" style="left:722px;top:453px">Happ...</span>
<div class="a" style="left:713px;top:464px;width:6px;height:6px;border-radius:50%;background:#f29cc4"></div>
<div class="a" style="left:722px;top:463px;width:55px;height:16px;background:#3ed8f0"></div><span class="lb" style="left:737px;top:466px;color:#222">Happy Bees</span>
<div class="kn" style="left:743px;top:486px"></div><span class="lb" style="left:748px;top:500px">0</span>
<div class="a" style="left:722px;top:508px;width:55px;height:16px;background:#f5e53a"></div><span class="lb" style="left:741px;top:512px;color:#222">Swarm</span>
<div class="kn" style="left:743px;top:529px"></div><span class="lb" style="left:745px;top:543px">0.00</span>
<div class="a" style="left:784px;top:452px;width:184px;height:98px;background:#262626"></div>
<span class="t" style="left:845px;top:500px">Drop Audio Effects Here</span>
<!-- status -->
<div class="a" style="left:52px;top:556px;width:916px;height:18px;background:#222"></div>
<div class="a" style="left:57px;top:561px;width:7px;height:7px;border-radius:50%;background:#f29cc4"></div>
<div class="a" style="left:74px;top:560px;width:680px;height:10px;background:#2a2a2a"></div>
<div class="a" style="left:716px;top:560px;width:90px;height:10px;background:#2a2a2a"></div><div class="a" style="left:773px;top:562px;width:50px;height:6px;background:#111"></div>
<div class="a" style="left:830px;top:560px;width:10px;height:10px;background:#f29cc4"></div>
<span class="t" style="left:845px;top:561px">Coffee Leaf</span>
<div class="a" style="left:880px;top:559px;width:62px;height:12px;border:1px solid #888;background:#1a1a1a"></div><div class="a" style="left:937px;top:561px;width:4px;height:8px;background:#e8d040"></div>
<div class="a" style="left:952px;top:561px;width:9px;height:8px;border-bottom:2px solid #f29cc4;background:repeating-linear-gradient(90deg,#f29cc4 0 1.5px,transparent 1.5px 3px)"></div>
</body></html>
